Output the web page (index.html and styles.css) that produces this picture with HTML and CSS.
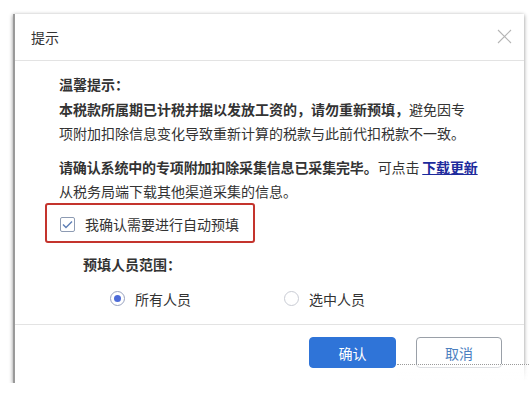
FILE: index.html
```html
<!DOCTYPE html>
<html lang="zh-CN">
<head>
  <meta charset="utf-8">
  <title>提示</title>
  <link rel="stylesheet" href="styles.css">
</head>
<body>
  <div class="dialog">
    <div class="dialog-header">
      <span class="dialog-title">提示</span>
      <svg class="close-icon" width="15" height="15" viewBox="0 0 15 15">
        <path d="M1 1 L14 14 M14 1 L1 14" stroke="#b5b5b5" stroke-width="1.1" fill="none"/>
      </svg>
    </div>

    <div class="dialog-body">
      <div class="tip">
        <div class="line"><b>温馨提示<span class="pc">：</span></b></div>
        <div class="line full"><b>本税款所属期已计税并据以发放工资的<span class="pc">，</span>请勿重新预填<span class="pc">，</span></b>避免因专</div>
        <div class="line full">项附加扣除信息变化导致重新计算的税款与此前代扣税款不一致<span class="pc">。</span></div>
      </div>
      <div class="tip tip-second">
        <div class="line wide"><b>请确认系统中的专项附加扣除采集信息已采集完毕<span class="pc">。</span></b>可点击 <a class="link" href="#">下载更新</a></div>
        <div class="line">从税务局端下载其他渠道采集的信息<span class="pc">。</span></div>
      </div>

      <!-- highlighted confirm checkbox -->
      <div class="confirm-box">
        <span class="checkbox">
          <svg width="11" height="9" viewBox="0 0 11 9">
            <path d="M1 4.5 L4 7.5 L10 1.5" stroke="#5e7fb6" stroke-width="1.4" fill="none"/>
          </svg>
        </span>
        <span>我确认需要进行自动预填</span>
      </div>

      <div class="range-label">预填人员范围<span class="pc">：</span></div>
      <div class="radio-row">
        <label class="radio-item first">
          <span class="radio checked"></span>
          <span>所有人员</span>
        </label>
        <label class="radio-item">
          <span class="radio"></span>
          <span>选中人员</span>
        </label>
      </div>
    </div>

    <div class="dialog-footer">
      <button class="btn btn-primary">确认</button>
      <button class="btn btn-default">取消</button>
    </div>

    <div class="watermark"></div>
  </div>
</body>
</html>
```

FILE: styles.css
```css
* {
  box-sizing: border-box;
}

body {
  margin: 0;
  background: #ffffff;
  font-family: "Noto Sans CJK SC", "Noto Sans", sans-serif;
  color: #333333;
  font-size: 14px;
}

.dialog {
  position: relative;
  margin: 14px 0 0 13px;
  width: 511px;
  height: 369px;
  background: #ffffff;
  border-left: 2px solid #9a9a9a;
  box-shadow: 0 1px 4px rgba(0,0,0,0.45);
  display: flex;
  flex-direction: column;
}

.dialog-header {
  height: 47px;
  border-bottom: 1px solid #e3e3e3;
  display: flex;
  align-items: center;
  justify-content: space-between;
  padding: 0 12px 0 16px;
}

.dialog-title {
  font-size: 14px;
  color: #333;
}

.close-icon {
  margin-top: -2px;
}

.dialog-body {
  flex: 1;
  padding: 11px 0 0 44px;
}

.tip {
  font-size: 14px;
  line-height: 24.5px;
}

.tip b {
  font-weight: 700;
}

.line {
  white-space: nowrap;
}

/* lines that run to the right edge of the text block */
.line.full {
  width: 404px;
  text-align: justify;
  text-align-last: justify;
}

.line.wide {
  width: 420px;
  letter-spacing: -0.15px;
}

/* full-width punctuation, keep a whole cell */
.pc {
  display: inline-block;
  width: 1em;
  text-align: left;
}

.tip-second {
  margin-top: 9px;
}

.link {
  color: #1d2a9c;
  font-weight: 700;
  text-decoration: underline;
}

/* red highlight round the checkbox */
.confirm-box {
  margin: -1px 0 0 -14px;
  width: 210px;
  height: 40px;
  border: 2px solid #c4342d;
  border-radius: 3px;
  display: flex;
  align-items: center;
  gap: 10px;
  padding: 3px 0 0 13px;
}

.checkbox {
  width: 15px;
  height: 15px;
  border: 1px solid #8d9bb3;
  border-radius: 2px;
  display: flex;
  align-items: center;
  justify-content: center;
}

.range-label {
  margin: 11px 0 0 24px;
  line-height: 20px;
  font-weight: 700;
}

.radio-row {
  display: flex;
  margin: 15px 0 0 51px;
  line-height: 20px;
}

.radio-item {
  display: flex;
  align-items: center;
  gap: 10px;
}

.radio-item.first {
  width: 174px;
}

.radio {
  width: 15px;
  height: 15px;
  border: 1px solid #c9ccd4;
  border-radius: 50%;
  display: flex;
  align-items: center;
  justify-content: center;
}

.radio.checked {
  border-color: #98a2bf;
}

.radio.checked::after {
  content: "";
  width: 7px;
  height: 7px;
  border-radius: 50%;
  background: #4d6bd8;
}

.dialog-footer {
  height: 59px;
  border-top: 1px solid #e3e3e3;
  display: flex;
  justify-content: flex-end;
  align-items: flex-start;
  gap: 20px;
  padding: 12px 22px 0 0;
}

.btn {
  width: 87px;
  height: 31px;
  border-radius: 4px;
  font-family: inherit;
  font-size: 14px;
  cursor: pointer;
}

.btn-primary {
  background: #2f74d8;
  border: 1px solid #2f74d8;
  color: #ffffff;
}

.btn-default {
  width: 86px;
  background: #ffffff;
  border: 1px solid #9aa0a8;
  color: #4c7fbf;
}

/* faint image watermark over the bottom right corner */
.watermark {
  position: absolute;
  left: 382px;
  top: 350px;
  width: 132px;
  height: 24px;
  border-top: 1px dotted #9a9a9a;
  background: linear-gradient(to bottom, rgba(255,255,255,0.6), #ffffff 70%);
}
```
